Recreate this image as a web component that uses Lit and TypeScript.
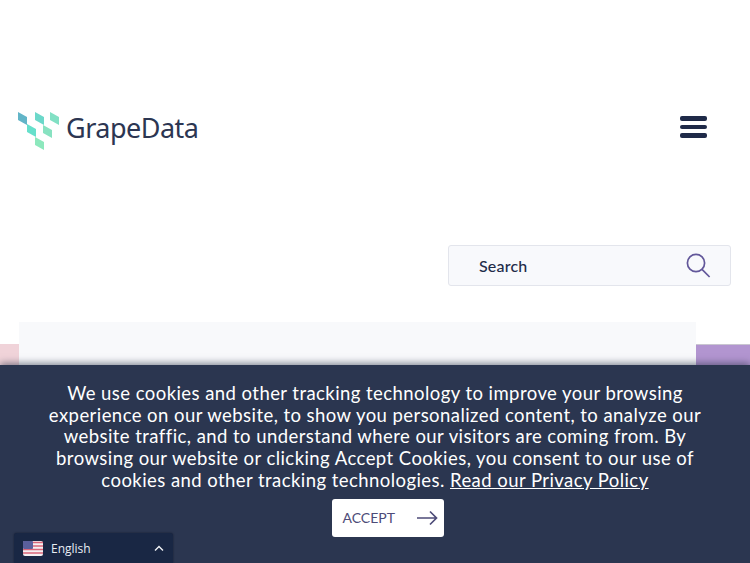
import { LitElement, html, css, svg } from "lit";
import { customElement } from "lit/decorators.js";

const tiles: [number, number, string][] = [
  [0, 0, "#62b5c8"],
  [17, 0, "#6cd8ca"],
  [32, 0, "#82e0c4"],
  [9, 12, "#66e0cb"],
  [25, 13, "#88e2c1"],
  [17, 25, "#8de8bd"],
];

@customElement("app-root")
export class AppRoot extends LitElement {
  static styles = css`
    :host {
      display: block;
      position: relative;
      width: 750px;
      height: 563px;
      overflow: hidden;
      background: #fff;
      font-family: "Lato", "Open Sans", sans-serif;
    }
    .header {
      display: flex;
      align-items: flex-start;
      justify-content: space-between;
      padding: 106px 43px 0 18px;
    }
    .brand {
      display: flex;
      align-items: flex-start;
      gap: 7px;
    }
    .brand svg {
      display: block;
      margin-top: 6px;
    }
    .name {
      font-family: "Noto Sans", sans-serif;
      font-size: 27px;
      line-height: 44px;
      color: #2c3652;
      letter-spacing: -0.5px;
    }
    .burger {
      display: flex;
      flex-direction: column;
      gap: 4px;
      width: 27px;
      margin-top: 10px;
    }
    .burger span {
      display: block;
      height: 4.5px;
      border-radius: 2px;
      background: #1f2a48;
    }
    .search-row {
      display: flex;
      justify-content: flex-end;
      padding: 95px 19px 0 0;
    }
    .search {
      box-sizing: border-box;
      width: 283px;
      height: 41px;
      display: flex;
      align-items: center;
      justify-content: space-between;
      padding: 0 19px 0 30px;
      background: #f8f9fc;
      border: 1px solid #e3e5ec;
      border-radius: 3px;
      font-size: 16px;
      font-weight: 500;
      letter-spacing: 0.2px;
      color: #222b49;
    }
    .stage {
      position: relative;
      height: 100px;
      margin-top: 36px;
      padding: 0 54px 0 19px;
    }
    .panel {
      height: 100%;
      background: #f8f9fb;
    }
    .pink,
    .violet {
      position: absolute;
      top: 22px;
      height: 30px;
    }
    .pink {
      left: 0;
      width: 19px;
      background: #f0d3d9;
    }
    .violet {
      right: 0;
      width: 54px;
      background: #b295d0;
      border-top: 1px solid #c9c6d0;
    }
    .banner {
      position: absolute;
      left: 0;
      right: 0;
      bottom: 0;
      height: 198px;
      box-sizing: border-box;
      padding-top: 18px;
      background: #2b3650;
      box-shadow: 0 -2px 7px rgba(40, 50, 70, 0.55);
      display: flex;
      flex-direction: column;
      align-items: center;
    }
    .copy {
      margin: 0;
      width: 700px;
      text-align: center;
      font-size: 18.5px;
      line-height: 21.7px;
      letter-spacing: 0.44px;
      color: #fff;
    }
    .copy a {
      color: inherit;
      text-decoration: underline;
    }
    .accept {
      margin: 7px 0 0 25px;
      box-sizing: border-box;
      width: 112px;
      height: 38px;
      display: flex;
      align-items: center;
      justify-content: space-between;
      padding: 0 6px 0 11px;
      background: #fff;
      border: 0;
      border-radius: 3px;
      font-family: inherit;
      font-size: 14px;
      color: #4d4b78;
    }
    .lang {
      position: absolute;
      left: 14px;
      bottom: 0;
      box-sizing: border-box;
      width: 159px;
      height: 30px;
      display: flex;
      align-items: center;
      padding: 0 9px;
      background: #192744;
      border-radius: 3px 3px 0 0;
      box-shadow: 0 0 2px rgba(10, 15, 30, 0.7);
      color: #e8edf3;
      font-family: "Open Sans", sans-serif;
      font-size: 12px;
    }
    .lang .label {
      flex: 1;
      margin-left: 8px;
    }
  `;

  render() {
    return html`
      <div class="header">
        <div class="brand">
          <svg width="41" height="38" viewBox="0 0 41 38" aria-hidden="true">
            ${tiles.map(
              ([x, y, c]) =>
                svg`<polygon points="${x},${y} ${x + 9},${y + 5} ${x + 9},${y + 13} ${x},${y + 8}" fill="${c}"></polygon>`
            )}
          </svg>
          <span class="name">GrapeData</span>
        </div>
        <div class="burger"><span></span><span></span><span></span></div>
      </div>

      <div class="search-row">
        <div class="search">
          <span>Search</span>
          <svg width="25" height="25" viewBox="0 0 25 25" fill="none" stroke="#62579a" stroke-width="1.7" aria-hidden="true">
            <circle cx="10" cy="10" r="8.6"></circle>
            <path d="M16 16.4 L23.6 24"></path>
          </svg>
        </div>
      </div>

      <div class="stage">
        <div class="pink"></div>
        <div class="violet"></div>
        <div class="panel"></div>
      </div>

      <div class="banner">
        <p class="copy">
          We use cookies and other tracking technology to improve your browsing<br />
          experience on our website, to show you personalized content, to analyze our<br />
          website traffic, and to understand where our visitors are coming from. By<br />
          browsing our website or clicking Accept Cookies, you consent to our use of<br />
          cookies and other tracking technologies.
          <a href="#">Read our Privacy Policy</a>
        </p>
        <button class="accept">
          <span>ACCEPT</span>
          <svg width="22" height="16" viewBox="0 0 22 16" fill="none" stroke="#4d4b78" stroke-width="1.7" aria-hidden="true">
            <path d="M1 8 H20.5 M14 1.5 L20.5 8 L14 14.5"></path>
          </svg>
        </button>
      </div>

      <div class="lang">
        <svg width="20" height="15" viewBox="0 0 20 15" aria-hidden="true">
          <rect width="20" height="15" rx="2" fill="#f4f0f2"></rect>
          <path d="M0 1.5H20M0 5H20M0 8.5H20M0 12H20" stroke="#d9667a" stroke-width="1.6"></path>
          <rect width="10" height="8" rx="1" fill="#5a5f9c"></rect>
        </svg>
        <span class="label">English</span>
        <svg width="10" height="7" viewBox="0 0 10 7" fill="none" stroke="#f1f3f6" stroke-width="1.4" aria-hidden="true">
          <path d="M1 5.5 L5 1.5 L9 5.5"></path>
        </svg>
      </div>
    `;
  }
}
